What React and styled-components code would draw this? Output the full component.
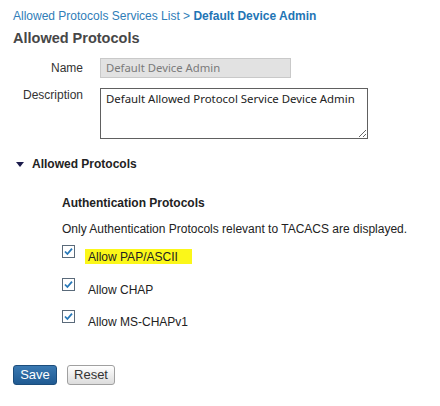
import React from "react";
import styled, { createGlobalStyle } from "styled-components";

const GlobalStyle = createGlobalStyle`
    html, body {
        margin: 0;
        padding: 0;
        background: #ffffff;
    }
    body {
        font-family: "Liberation Sans", Arial, sans-serif;
        font-size: 12px;
        color: #333333;
    }
`;

const protocols = [
    { id: "pap", label: "Allow PAP/ASCII", highlighted: true },
    { id: "chap", label: "Allow CHAP" },
    { id: "mschap", label: "Allow MS-CHAPv1" },
];

function CheckIcon() {
    return (
        <svg width="13" height="13" viewBox="0 0 13 13">
            <rect x="0.5" y="0.5" width="12" height="12" fill="#fff" stroke="#5a6a7a" />
            <path
                d="M3 6.5 L5.4 9 L10 3.6"
                fill="none"
                stroke="#2878b8"
                strokeWidth="1.8"
            />
        </svg>
    );
}

function App() {
    return (
        <>
            <GlobalStyle />
            <Page>
                <Breadcrumb>
                    <span>Allowed Protocols Services List &gt; </span>
                    <Current>Default Device Admin</Current>
                </Breadcrumb>
                <Title>Allowed Protocols</Title>

                <Form>
                    <Label $offset={3}>Name</Label>
                    <ReadOnlyInput>Default Device Admin</ReadOnlyInput>
                    <Label $offset={0}>Description</Label>
                    <TextArea
                        defaultValue="Default Allowed Protocol Service Device Admin"
                    />
                </Form>

                <SectionHeader>
                    <Triangle />
                    <span>Allowed Protocols</span>
                </SectionHeader>

                <Section>
                    <SubTitle>Authentication Protocols</SubTitle>
                    <Note>
                        Only Authentication Protocols relevant to TACACS are
                        displayed.
                    </Note>
                    <CheckList>
                        {protocols.map((p) => (
                            <CheckRow key={p.id}>
                                <CheckIcon />
                                <CheckLabel $highlighted={p.highlighted}>
                                    {p.label}
                                </CheckLabel>
                            </CheckRow>
                        ))}
                    </CheckList>
                </Section>

                <Buttons>
                    <SaveButton>Save</SaveButton>
                    <ResetButton>Reset</ResetButton>
                </Buttons>
            </Page>
        </>
    );
}

const Page = styled.div`
    width: 440px;
    height: 406px;
    box-sizing: border-box;
    padding: 9px 0 0 13px;
    display: flex;
    flex-direction: column;
`;

const Breadcrumb = styled.div`
    font-size: 12px;
    line-height: 14px;
    color: #2f7db8;
`;

const Current = styled.span`
    font-weight: bold;
    color: #1f75b5;
`;

const Title = styled.div`
    margin-top: 6px;
    font-size: 14.5px;
    line-height: 18px;
    font-weight: bold;
    color: #474747;
`;

const Form = styled.div`
    margin-top: 11px;
    display: grid;
    grid-template-columns: 70px auto;
    column-gap: 17px;
    row-gap: 10px;
    align-items: start;
`;

const Label = styled.div`
    text-align: right;
    font-size: 12px;
    line-height: 14px;
    padding-top: ${(p) => p.$offset}px;
    color: #333;
`;

const ReadOnlyInput = styled.div`
    width: 191px;
    height: 20px;
    box-sizing: border-box;
    border: 1px solid #c9c9c9;
    background: #e2e2e2;
    color: #7a7a7a;
    font-family: "Noto Sans", sans-serif;
    font-size: 11.3px;
    line-height: 18px;
    padding-left: 5px;
`;

const TextArea = styled.textarea`
    width: 268px;
    height: 51px;
    box-sizing: border-box;
    margin: 0;
    border: 1px solid #606060;
    border-radius: 0;
    padding: 2px 5px;
    font-family: "Noto Sans", sans-serif;
    font-size: 11.4px;
    line-height: 16px;
    color: #222;
    resize: both;
    outline: none;
`;

const SectionHeader = styled.div`
    margin-top: 18px;
    display: flex;
    align-items: center;
    gap: 8px;
    padding-left: 3px;
    font-weight: bold;
    font-size: 12px;
    line-height: 14px;
    color: #222;
`;

const Triangle = styled.span`
    width: 0;
    height: 0;
    border-left: 4px solid transparent;
    border-right: 4px solid transparent;
    border-top: 5px solid #1c1c4c;
`;

const Section = styled.div`
    margin-top: 25px;
    padding-left: 49px;
    display: flex;
    flex-direction: column;
`;

const SubTitle = styled.div`
    font-weight: bold;
    font-size: 12px;
    line-height: 14px;
    color: #222;
`;

const Note = styled.div`
    margin-top: 12px;
    font-size: 12px;
    line-height: 14px;
    color: #222;
`;

const CheckList = styled.div`
    margin-top: 9px;
    display: flex;
    flex-direction: column;
    gap: 19px;
`;

const CheckRow = styled.div`
    display: flex;
    align-items: flex-start;
    gap: 13px;
    height: 13.5px;

    svg {
        flex-shrink: 0;
    }
`;

const CheckLabel = styled.span`
    margin-top: 4px;
    padding: 1px 14px 0 3px;
    margin-left: -3px;
    font-size: 12px;
    line-height: 14px;
    color: #222;
    background: ${(p) => (p.$highlighted ? "#fbf719" : "transparent")};
`;

const Buttons = styled.div`
    margin-top: 41px;
    display: flex;
    gap: 10px;
`;

const BaseButton = styled.button`
    height: 20px;
    box-sizing: border-box;
    padding: 0;
    border-radius: 3px;
    font-family: "Liberation Sans", Arial, sans-serif;
    font-size: 13px;
    line-height: 18px;
    cursor: pointer;
`;

const SaveButton = styled(BaseButton)`
    width: 44px;
    border: 1px solid #1c4d7c;
    background: linear-gradient(#3a79b2, #1f5a92);
    color: #fff;
`;

const ResetButton = styled(BaseButton)`
    width: 48px;
    border: 1px solid #a0a0a0;
    background: linear-gradient(#ffffff, #dcdcdc);
    color: #333;
`;

export default App;
